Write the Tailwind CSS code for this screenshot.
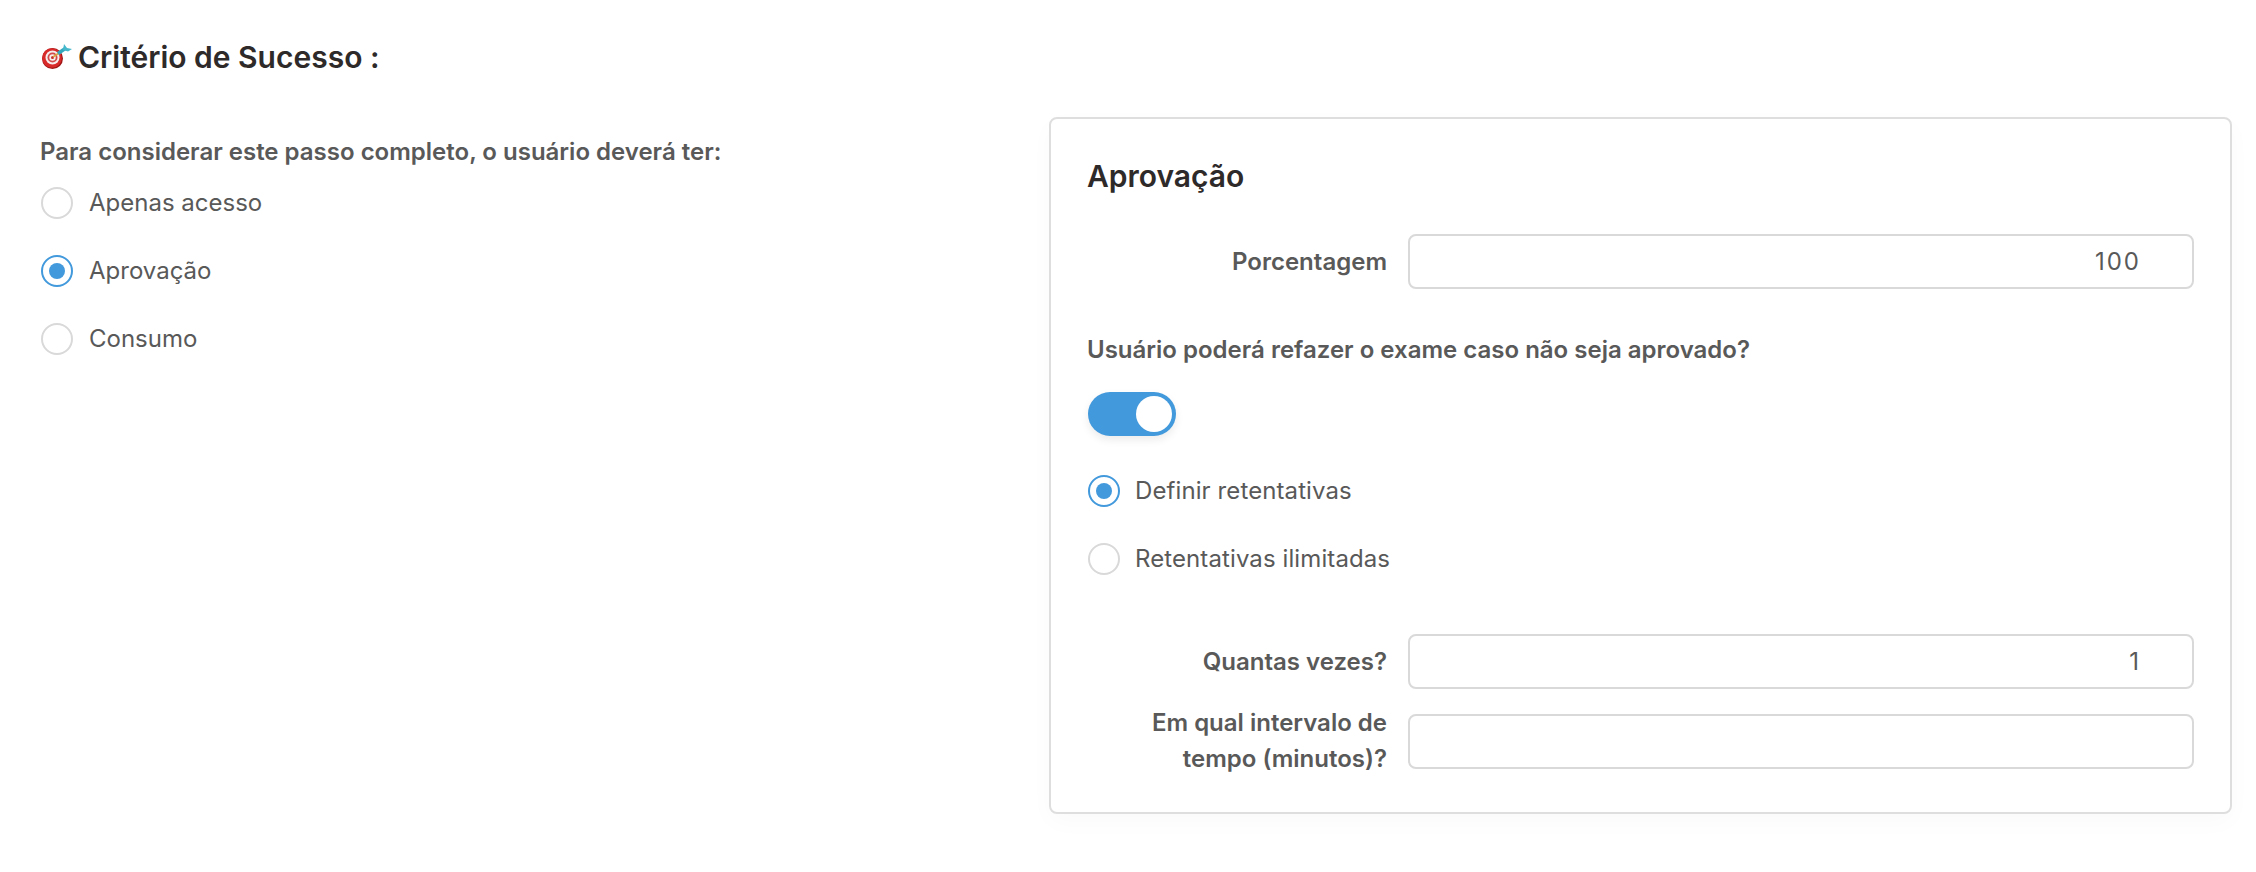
<!DOCTYPE html>
<html lang="pt-BR">
<head>
    <meta charset="UTF-8">
    <meta name="viewport" content="width=device-width, initial-scale=1.0">
    <title>Critério de Sucesso</title>
    <script src="https://cdn.jsdelivr.net/npm/@tailwindcss/browser@4"></script>
</head>
<body class="bg-white font-['Inter',sans-serif] text-[24px] text-[#595959] h-[872px] overflow-hidden">
    <h2 class="flex items-start pl-[40px] pt-[35px] h-[117px] text-[30px] leading-[44px] font-semibold text-[#2e2a2a]">
        <svg class="w-[34px] h-[30px] mr-[4px] mt-[7px] shrink-0" viewBox="0 0 34 30">
            <circle cx="12.5" cy="16.5" r="10.5" fill="#9f1616"/>
            <circle cx="12" cy="16" r="9.8" fill="#d92a2a"/>
            <circle cx="12.5" cy="15.5" r="7" fill="#f6eeee"/>
            <circle cx="12.5" cy="15.5" r="5" fill="#d44a4a"/>
            <circle cx="12.5" cy="15.5" r="3.2" fill="#f6eeee"/>
            <circle cx="12.5" cy="15.5" r="1.5" fill="#c92a2a"/>
            <path d="M13 15 L19 11" stroke="#d9a441" stroke-width="1.6"/>
            <path d="M18 11.5 L26 6" stroke="#35a7bd" stroke-width="3.4"/>
            <path d="M24 2 L27 6 L32 7 L28 9.5 L23 8 Z" fill="#45b8cc"/>
        </svg>
        <span>Critério de Sucesso :</span>
    </h2>

    <div class="flex items-start">
        <div class="w-[1049px] shrink-0 pl-[40px] pt-[17px]">
            <p class="font-semibold leading-[36px]">Para considerar este passo completo, o usuário deverá ter:</p>
            <div class="mt-[-1px]">
                <label class="flex items-center h-[68px] gap-[16px] pl-px">
                    <span class="w-[32px] h-[32px] rounded-full border-2 border-[#d9d9d9] bg-white"></span>
                    <span>Apenas acesso</span>
                </label>
                <label class="flex items-center h-[68px] gap-[16px] pl-px">
                    <span class="w-[32px] h-[32px] rounded-full border-2 border-[#4299dc] bg-white flex items-center justify-center"><span class="w-[16px] h-[16px] rounded-full bg-[#4299dc]"></span></span>
                    <span>Aprovação</span>
                </label>
                <label class="flex items-center h-[68px] gap-[16px] pl-px">
                    <span class="w-[32px] h-[32px] rounded-full border-2 border-[#d9d9d9] bg-white"></span>
                    <span>Consumo</span>
                </label>
            </div>
        </div>

        <div class="w-[1183px] h-[697px] border-2 border-[#dedede] rounded-[8px] bg-white shadow-[0_8px_24px_rgba(0,0,0,0.025)] pl-[37px] pr-[36px] pt-[37px]">
            <h3 class="text-[30px] leading-[40px] font-semibold text-[#2e2a2a] ml-[-1px]">Aprovação</h3>

            <div class="flex items-center gap-[21px] mt-[38px]">
                <label class="w-[299px] shrink-0 text-right font-semibold">Porcentagem</label>
                <input type="text" value="100" readonly class="flex-1 min-w-0 h-[55px] border-2 border-[#d9d9d9] rounded-[8px] text-right tracking-[2px] pr-[51px] bg-white outline-none">
            </div>

            <p class="font-semibold leading-[36px] mt-[43px] ml-[-1px]">Usuário poderá refazer o exame caso não seja aprovado?</p>

            <div class="relative w-[88px] h-[44px] rounded-full bg-[#4299dc] mt-[24px] shadow-[0_4px_8px_rgba(0,0,0,0.08)]">
                <span class="absolute right-[4px] top-[4px] w-[36px] h-[36px] rounded-full bg-white"></span>
            </div>

            <div class="mt-[21px] tracking-[0.1px]">
                <label class="flex items-center h-[68px] gap-[15px]">
                    <span class="w-[32px] h-[32px] rounded-full border-2 border-[#4299dc] bg-white flex items-center justify-center"><span class="w-[16px] h-[16px] rounded-full bg-[#4299dc]"></span></span>
                    <span>Definir retentativas</span>
                </label>
                <label class="flex items-center h-[68px] gap-[15px]">
                    <span class="w-[32px] h-[32px] rounded-full border-2 border-[#d9d9d9] bg-white"></span>
                    <span>Retentativas ilimitadas</span>
                </label>
            </div>

            <div class="flex items-center gap-[21px] mt-[41px]">
                <label class="w-[299px] shrink-0 text-right font-semibold">Quantas vezes?</label>
                <input type="text" value="1" readonly class="flex-1 min-w-0 h-[55px] border-2 border-[#d9d9d9] rounded-[8px] text-right tracking-[2px] pr-[51px] bg-white outline-none">
            </div>

            <div class="flex items-center gap-[21px] mt-[16px]">
                <label class="w-[299px] shrink-0 text-right font-semibold leading-[36px]">Em qual intervalo de tempo (minutos)?</label>
                <input type="text" class="flex-1 min-w-0 h-[55px] border-2 border-[#d9d9d9] rounded-[8px] text-right pr-[51px] bg-white outline-none">
            </div>
        </div>
    </div>
</body>
</html>
